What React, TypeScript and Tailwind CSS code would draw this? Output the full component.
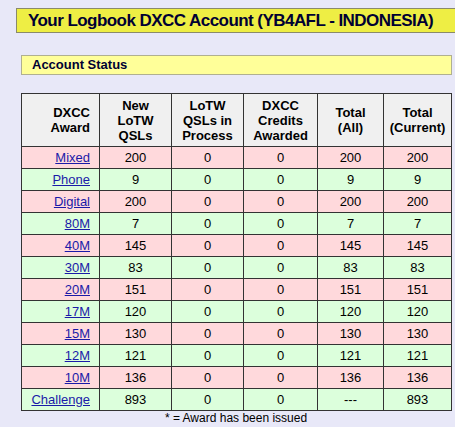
import React from "react";

type Row = {
  award: string;
  newQsls: string;
  inProcess: string;
  credits: string;
  totalAll: string;
  totalCurrent: string;
};

const rows: Row[] = [
  { award: "Mixed", newQsls: "200", inProcess: "0", credits: "0", totalAll: "200", totalCurrent: "200" },
  { award: "Phone", newQsls: "9", inProcess: "0", credits: "0", totalAll: "9", totalCurrent: "9" },
  { award: "Digital", newQsls: "200", inProcess: "0", credits: "0", totalAll: "200", totalCurrent: "200" },
  { award: "80M", newQsls: "7", inProcess: "0", credits: "0", totalAll: "7", totalCurrent: "7" },
  { award: "40M", newQsls: "145", inProcess: "0", credits: "0", totalAll: "145", totalCurrent: "145" },
  { award: "30M", newQsls: "83", inProcess: "0", credits: "0", totalAll: "83", totalCurrent: "83" },
  { award: "20M", newQsls: "151", inProcess: "0", credits: "0", totalAll: "151", totalCurrent: "151" },
  { award: "17M", newQsls: "120", inProcess: "0", credits: "0", totalAll: "120", totalCurrent: "120" },
  { award: "15M", newQsls: "130", inProcess: "0", credits: "0", totalAll: "130", totalCurrent: "130" },
  { award: "12M", newQsls: "121", inProcess: "0", credits: "0", totalAll: "121", totalCurrent: "121" },
  { award: "10M", newQsls: "136", inProcess: "0", credits: "0", totalAll: "136", totalCurrent: "136" },
  { award: "Challenge", newQsls: "893", inProcess: "0", credits: "0", totalAll: "---", totalCurrent: "893" },
];

export default function App() {
  return (
    <div className="min-h-[427px] w-[455px] overflow-hidden bg-[#e8e8f8] pt-2 font-['Liberation_Sans',Arial,sans-serif] text-[13px] text-black">
      {/* page title */}
      <div className="ml-4 flex h-[25px] w-[460px] items-center border border-[#8a8a6a] bg-[#eeee44] pl-[11px]">
        <h1 className="whitespace-nowrap text-[17px] font-bold leading-none tracking-[-0.55px] text-[#000033]">
          Your Logbook DXCC Account (YB4AFL - INDONESIA)
        </h1>
      </div>

      <div className="ml-[21px] mt-[22px] flex h-[20px] w-[431px] items-center border border-[#b0b090] bg-[#ffff99] pl-[10px]">
        <span className="text-[13px] font-bold text-[#000033]">Account Status</span>
      </div>

      <table className="ml-[21px] mt-[18px] w-[430px] table-fixed border-collapse border border-black">
        <colgroup>
          <col className="w-[78px]" />
          <col className="w-[72px]" />
          <col className="w-[72px]" />
          <col className="w-[74px]" />
          <col className="w-[66px]" />
          <col className="w-[68px]" />
        </colgroup>
        <thead>
          <tr className="h-[53px] bg-[#f0f0f0] font-bold leading-[15px]">
            <th className="border border-[#333] pr-[9px] text-right">
              DXCC
              <br />
              Award
            </th>
            <th className="border border-[#333] text-center">
              New
              <br />
              LoTW
              <br />
              QSLs
            </th>
            <th className="border border-[#333] text-center">
              LoTW
              <br />
              QSLs in
              <br />
              Process
            </th>
            <th className="border border-[#333] text-center">
              DXCC
              <br />
              Credits
              <br />
              Awarded
            </th>
            <th className="border border-[#333] text-center">
              Total
              <br />
              (All)
            </th>
            <th className="border border-[#333] text-center">
              Total
              <br />
              (Current)
            </th>
          </tr>
        </thead>
        <tbody>
          {rows.map((r, i) => (
            <tr key={r.award} className={`h-[22px] ${i % 2 === 0 ? "bg-[#ffd9dc]" : "bg-[#dcffdc]"}`}>
              <td className="border border-[#333] pr-[9px] text-right">
                <a href="#" className="text-[#1a1aa8] underline">
                  {r.award}
                </a>
              </td>
              <td className="border border-[#333] text-center">{r.newQsls}</td>
              <td className="border border-[#333] text-center">{r.inProcess}</td>
              <td className="border border-[#333] text-center">{r.credits}</td>
              <td className="border border-[#333] text-center">{r.totalAll}</td>
              <td className="border border-[#333] text-center">{r.totalCurrent}</td>
            </tr>
          ))}
        </tbody>
      </table>

      <p className="w-[472px] text-center text-[12px] leading-[14px]">* = Award has been issued</p>
    </div>
  );
}
